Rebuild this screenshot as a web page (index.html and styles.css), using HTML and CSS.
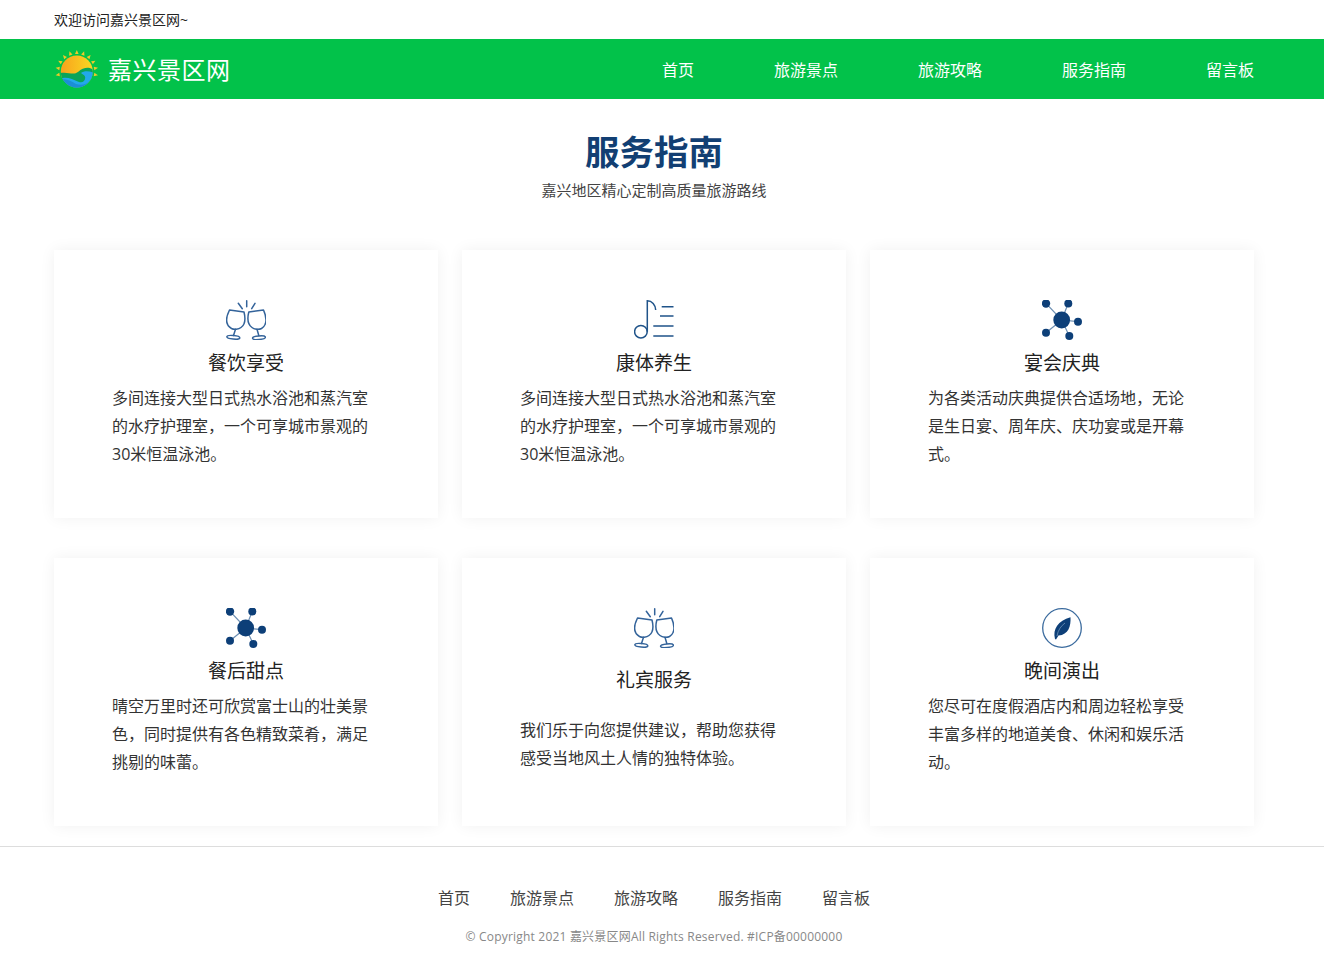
FILE: index.html
```html
<!DOCTYPE html>
<html lang="zh-CN">
<head>
<meta charset="utf-8">
<title>嘉兴景区网 - 服务指南</title>
<link rel="stylesheet" href="styles.css">
</head>
<body>
<svg class="defs" width="0" height="0" aria-hidden="true">
  <defs>
    <linearGradient id="sun" x1="0" y1="0" x2="1" y2="0"><stop offset="0" stop-color="#f9a21c"/><stop offset="1" stop-color="#f8d823"/></linearGradient>
    <clipPath id="disc"><circle cx="22.800" cy="23.500" r="16"/></clipPath>
    <symbol id="i-glass" viewBox="0 0 40 40">
      <g fill="none" stroke="#33639a" stroke-width="1.500" stroke-linecap="round" stroke-linejoin="round">
        <path d="M3.500 10 18 12C19.500 18 20 24 15 27.500 12.500 29.500 8 29.800 5.500 28.500 -.5 25 -.5 18 3.500 10Z"/>
        <path d="M9.500 29.300 7.500 35.500"/>
        <ellipse cx="7.300" cy="37.300" rx="6.500" ry="1.800" transform="rotate(5 7.300 37.300)"/>
        <path d="M37.500 10 22.800 12C21.300 18 21 24 26 27.500 28.500 29.500 33 29.800 35.500 28.500 41 25 41 18 37.500 10Z"/>
        <path d="M31 29.300 32.800 35.500"/>
        <ellipse cx="33" cy="37.700" rx="6.500" ry="1.800" transform="rotate(-5 33 37.700)"/>
        <path d="M12.300 3.300 16.300 8.700M20.700 .8V6.700M29 3.300 25.700 8.700"/>
      </g>
    </symbol>
    <symbol id="i-music" viewBox="0 0 40 40">
      <g fill="none" stroke="#1f5389" stroke-width="1.500">
        <circle cx="6.900" cy="31.700" r="6.300"/>
        <path d="M13.300 31.700V.8C18 .8 21.500 5 21.700 10"/>
        <path d="M27.700 6.700H39.500M26 16H39.500M19.300 26H39.500M19.300 36H39.500"/>
      </g>
    </symbol>
    <symbol id="i-net" viewBox="0 0 40 40">
      <g stroke="#6d8fb3" stroke-width="1.200"><path d="M4 3.300 19.700 20M26.300 3.300 19.700 20M36 21.700 19.700 20M4 32.700 19.700 20M27.300 36 19.700 20"/></g>
      <g fill="#0d3f78"><circle cx="19.700" cy="20" r="8.400"/><circle cx="4" cy="3.500" r="4.200"/><circle cx="26.300" cy="3.500" r="4"/><circle cx="36" cy="21.700" r="4"/><circle cx="4" cy="32.700" r="4"/><circle cx="27.300" cy="36" r="4"/></g>
    </symbol>
    <symbol id="i-leaf" viewBox="0 0 40 40">
      <circle cx="20" cy="20" r="19.300" fill="none" stroke="#3b6b9e" stroke-width="1.300"/>
      <path d="M28.500 9.300C29 18 26.500 27 16.500 27.500L14 31.500 13 31C10.500 21 16 13 28.500 9.300Z" fill="#0d3f78"/>
      <path d="M15 28C16 22 19 18 23 15" fill="none" stroke="#7d9dc0" stroke-width=".7"/>
    </symbol>
  </defs>
</svg>

<div class="topbar"><div class="wrap">欢迎访问嘉兴景区网~</div></div>

<header class="nav">
  <div class="wrap nav-inner">
    <a class="brand" href="#">
      <svg class="logo" width="44" height="44" viewBox="0 0 44 44" aria-hidden="true">
        <g fill="#f0c92a">
          <path d="M22.800 2 21 6H24.600Z" transform="rotate(-100 22.800 23.500)"/>
          <path d="M22.800 2 21 6H24.600Z" transform="rotate(-80 22.800 23.500)"/>
          <path d="M22.800 2 21 6H24.600Z" transform="rotate(-60 22.800 23.500)"/>
          <path d="M22.800 2 21 6H24.600Z" transform="rotate(-40 22.800 23.500)"/>
          <path d="M22.800 2 21 6H24.600Z" transform="rotate(-20 22.800 23.500)"/>
          <path d="M22.800 2 21 6H24.600Z"/>
          <path d="M22.800 2 21 6H24.600Z" transform="rotate(20 22.800 23.500)"/>
          <path d="M22.800 2 21 6H24.600Z" transform="rotate(40 22.800 23.500)"/>
          <path d="M22.800 2 21 6H24.600Z" transform="rotate(60 22.800 23.500)"/>
          <path d="M22.800 2 21 6H24.600Z" transform="rotate(80 22.800 23.500)"/>
          <path d="M22.800 2 21 6H24.600Z" transform="rotate(100 22.800 23.500)"/>
        </g>
        <circle cx="22.800" cy="23.500" r="16" fill="url(#sun)"/>
        <g clip-path="url(#disc)">
          <path d="M5 25.300C14 23 19 28 24.300 23.700 27 21 31 19.500 34.300 19.700 37 20 38.500 21 40 23V42H5Z" fill="#0aa45a"/>
          <path d="M27 25C30 22.500 35 22.500 40 25V42H5V31C12 28 18 31 25 34 29 35.500 32 32 31 28.500 30 26.500 28 26 27 25Z" fill="#22a9ec"/>
          <path d="M5 32C12 30 17 33 22 36 28 38 33 36 36 33V42H5Z" fill="#1c8ed6"/>
        </g>
      </svg>
      <span class="brand-name">嘉兴景区网</span>
    </a>
    <nav class="menu">
      <a href="#">首页</a>
      <a href="#">旅游景点</a>
      <a href="#">旅游攻略</a>
      <a href="#">服务指南</a>
      <a href="#">留言板</a>
    </nav>
  </div>
</header>

<main class="wrap">
  <section class="heading">
    <h1>服务指南</h1>
    <p>嘉兴地区精心定制高质量旅游路线</p>
  </section>
  <section class="cards">
    <article class="card">
      <svg class="icon"><use href="#i-glass"/></svg>
      <h2>餐饮享受</h2>
      <p>多间连接大型日式热水浴池和蒸汽室的水疗护理室，一个可享城市景观的30米恒温泳池。</p>
    </article>
    <article class="card">
      <svg class="icon"><use href="#i-music"/></svg>
      <h2>康体养生</h2>
      <p>多间连接大型日式热水浴池和蒸汽室的水疗护理室，一个可享城市景观的30米恒温泳池。</p>
    </article>
    <article class="card">
      <svg class="icon"><use href="#i-net"/></svg>
      <h2>宴会庆典</h2>
      <p>为各类活动庆典提供合适场地，无论是生日宴、周年庆、庆功宴或是开幕式。</p>
    </article>
    <article class="card">
      <svg class="icon"><use href="#i-net"/></svg>
      <h2>餐后甜点</h2>
      <p>晴空万里时还可欣赏富士山的壮美景色，同时提供有各色精致菜肴，满足挑剔的味蕾。</p>
    </article>
    <article class="card card-loose">
      <svg class="icon"><use href="#i-glass"/></svg>
      <h2>礼宾服务</h2>
      <p>我们乐于向您提供建议，帮助您获得感受当地风土人情的独特体验。</p>
    </article>
    <article class="card">
      <svg class="icon"><use href="#i-leaf"/></svg>
      <h2>晚间演出</h2>
      <p>您尽可在度假酒店内和周边轻松享受丰富多样的地道美食、休闲和娱乐活动。</p>
    </article>
  </section>
</main>

<footer class="footer">
  <div class="wrap">
    <nav class="foot-links">
      <a href="#">首页</a>
      <a href="#">旅游景点</a>
      <a href="#">旅游攻略</a>
      <a href="#">服务指南</a>
      <a href="#">留言板</a>
    </nav>
    <p class="copy">© Copyright 2021 嘉兴景区网All Rights Reserved. #ICP备00000000</p>
  </div>
</footer>
</body>
</html>
```
FILE: styles.css
```css
* { box-sizing: border-box; }
html, body { margin: 0; padding: 0; }
body {
  font-family: "Open Sans", "Noto Sans CJK SC", sans-serif;
  color: #333;
  background: #fff;
  overflow-x: hidden;
}
a { color: inherit; text-decoration: none; }
.defs { position: absolute; }
.wrap { width: 1200px; margin-left: 54px; }

.topbar { height: 39px; font-size: 14px; line-height: 39px; color: #222; }

.nav { height: 60px; background: #02c24a; color: #fff; }
.nav-inner { display: flex; justify-content: space-between; align-items: center; height: 60px; }
.brand { display: flex; align-items: center; }
.logo { display: block; flex: none; margin-top: 2px; }
.brand-name { margin: 2px 0 0 10px; font-size: 24px; letter-spacing: .5px; line-height: 60px; }
.menu { display: flex; gap: 80px; margin-top: 2px; font-size: 16px; line-height: 60px; }

.heading { height: 151px; padding-top: 30px; text-align: center; }
.heading h1 { margin: 0; font-size: 34.5px; line-height: 46px; font-weight: 700; color: #123f73; }
.heading p { margin: 5px 0 0; font-size: 15px; line-height: 20px; color: #444; }

.cards { display: grid; grid-template-columns: repeat(3, 384px); column-gap: 24px; row-gap: 40px; }
.card {
  height: 268px;
  padding: 50px 58px 0;
  background: #fff;
  box-shadow: 0 0 15px rgba(0, 0, 0, .06);
  text-align: center;
}
.icon { display: block; width: 40px; height: 40px; margin: 0 auto; }
.card h2 { margin: 10px 0 0; font-size: 19px; font-weight: 400; line-height: 26px; color: #222; }
.card p { margin: 8px 0 0; font-size: 16px; line-height: 28px; text-align: left; color: #333; }
.card-loose h2 { margin-top: 19px; }
.card-loose p { margin-top: 23px; }

.footer { margin-top: 20px; border-top: 1px solid #ddd; height: 118px; padding-top: 39px; }
.foot-links { display: flex; justify-content: center; gap: 40px; font-size: 16px; line-height: 24px; color: #444; }
.copy { margin: 18px 0 0; font-size: 12px; line-height: 18px; letter-spacing: .2px; text-align: center; color: #888; }
```
